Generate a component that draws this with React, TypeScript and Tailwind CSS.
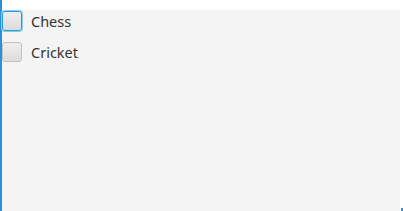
import React, { useState } from 'react';

interface CheckRowProps {
  label: string;
  focused?: boolean;
}

function CheckRow({ label, focused }: CheckRowProps) {
  const [checked, setChecked] = useState(false);
  return (
    <label className="flex items-center h-[20px] gap-[9px] cursor-default select-none">
      <span
        onClick={() => setChecked(!checked)}
        className={
          focused
            ? 'w-[20px] h-[20px] rounded-[3px] border border-[#2a9fd6] shadow-[0_0_0_1px_#8cc8ea] bg-gradient-to-b from-[#efefef] to-[#dcdcdc] flex items-center justify-center'
            : 'w-[20px] h-[20px] rounded-[3px] border border-[#c2c2c2] bg-gradient-to-b from-[#efefef] to-[#dcdcdc] flex items-center justify-center'
        }
      >
        {checked && (
          <svg width="12" height="12" viewBox="0 0 12 12">
            <path d="M2 6.5l2.5 2.5L10 3" fill="none" stroke="#333" strokeWidth={2} />
          </svg>
        )}
      </span>
      <span className="text-[14.5px] text-[#333333] leading-none">{label}</span>
    </label>
  );
}

export default function App() {
  return (
    <div
      className="w-[403px] h-[211px] bg-white flex overflow-hidden"
      style={{ fontFamily: '"Noto Sans", "Open Sans", sans-serif' }}
    >
      <div className="w-[2px] h-full bg-[#2b8fdf]" />
      <div className="mt-[10px] w-[398px] h-[201px] bg-[#f4f4f4] border-t border-[#f7f7f7] flex flex-col gap-[11px]">
        <CheckRow label="Chess" focused />
        <CheckRow label="Cricket" />
      </div>
      <div className="flex-1 flex flex-col justify-end">
        <div className="h-[3px] w-[2px] ml-auto bg-[#2b8fdf]" />
      </div>
    </div>
  );
}
